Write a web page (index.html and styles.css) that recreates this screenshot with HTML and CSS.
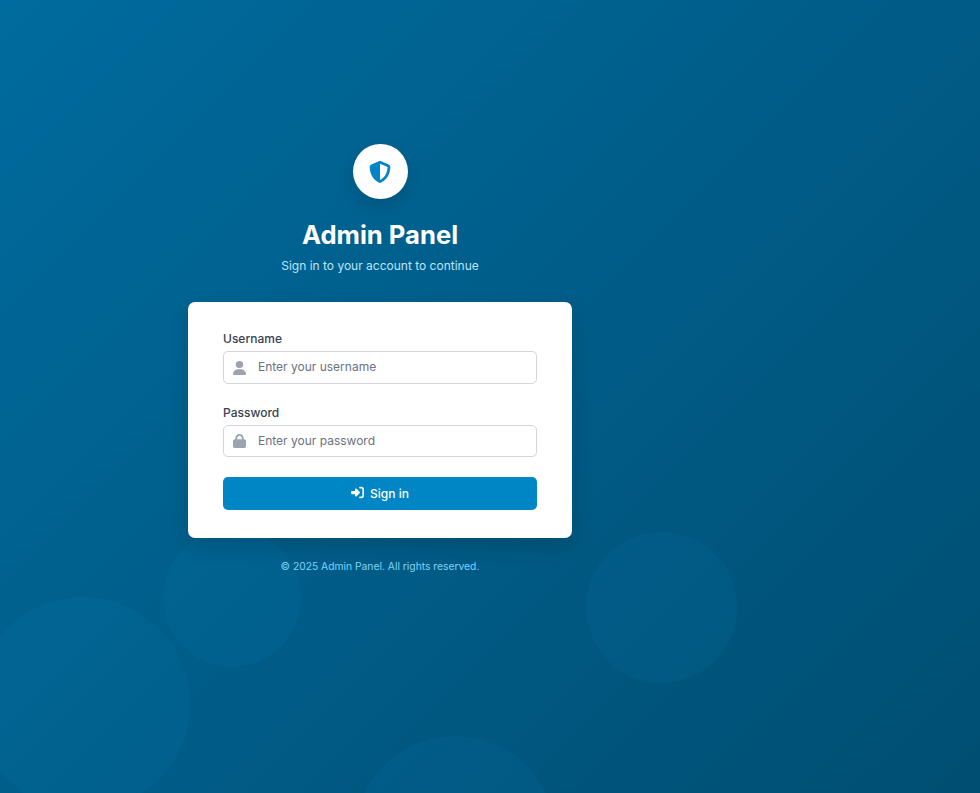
FILE: index.html

```html
<!DOCTYPE html>
<html lang="en">
<head>
  <meta charset="UTF-8" />
  <meta name="viewport" content="width=device-width, initial-scale=1.0"/>
  <title>Admin Panel - Login</title>
  <link rel="stylesheet" href="styles.css">
</head>
<body>
  <div class="circles">
    <div class="circle circle-large"></div>
    <div class="circle circle-small"></div>
    <div class="circle circle-right"></div>
    <div class="circle circle-bottom"></div>
  </div>

  <main class="login-column">
    <div class="logo">
      <svg class="logo-icon" viewBox="0 0 512 512"><path d="M256 0c4.600 0 9.200 1 13.400 2.900L457.700 82.800c22 9.300 38.400 31 38.300 57.200c-.5 99.200-41.300 280.700-213.600 363.200c-16.700 8-36.100 8-52.800 0C57.300 420.700 16.500 239.200 16 140c-.1-26.200 16.300-47.900 38.300-57.200L242.700 2.900C246.800 1 251.400 0 256 0zm0 66.800V444.800C394 378 431.100 230.100 432 141.400L256 66.800l0 0z"/></svg>
    </div>
    <h1>Admin Panel</h1>
    <p class="subtitle">Sign in to your account to continue</p>

    <form class="card">
      <div class="field">
        <label for="username">Username</label>
        <div class="input-wrap">
          <svg class="input-icon" viewBox="0 0 448 512" preserveAspectRatio="none"><path d="M224 256A128 128 0 1 0 224 0a128 128 0 1 0 0 256zm-45.700 48C79.800 304 0 383.800 0 482.300C0 498.700 13.300 512 29.700 512H418.300c16.400 0 29.700-13.300 29.700-29.700C448 383.800 368.200 304 269.700 304H178.300z"/></svg>
          <input type="text" id="username" placeholder="Enter your username" />
        </div>
      </div>
      <div class="field">
        <label for="password">Password</label>
        <div class="input-wrap">
          <svg class="input-icon" viewBox="0 0 448 512" preserveAspectRatio="none"><path d="M144 144v48H304V144c0-44.200-35.800-80-80-80s-80 35.800-80 80zM80 192V144C80 64.500 144.500 0 224 0s144 64.500 144 144v48h16c35.300 0 64 28.700 64 64V448c0 35.300-28.700 64-64 64H64c-35.300 0-64-28.700-64-64V256c0-35.300 28.700-64 64-64H80z"/></svg>
          <input type="password" id="password" placeholder="Enter your password" />
        </div>
      </div>
      <button type="button" class="submit">
        <svg class="submit-icon" viewBox="0 0 512 512"><path d="M217.900 105.900L340.700 228.700c7.200 7.200 11.300 17.100 11.300 27.300s-4.100 20.100-11.300 27.300L217.900 406.100c-6.400 6.400-15 9.900-24 9.900c-18.700 0-33.900-15.200-33.900-33.900l0-62.100L32 320c-17.700 0-32-14.300-32-32l0-64c0-17.700 14.300-32 32-32l128 0 0-62.100c0-18.700 15.200-33.900 33.900-33.900c9 0 17.600 3.600 24 9.900zM352 416l64 0c17.700 0 32-14.300 32-32l0-256c0-17.700-14.300-32-32-32l-64 0c-17.700 0-32-14.300-32-32s14.300-32 32-32l64 0c53 0 96 43 96 96l0 256c0 53-43 96-96 96l-64 0c-17.700 0-32-14.300-32-32s14.300-32 32-32z"/></svg>
        Sign in
      </button>
    </form>

    <p class="copyright">© 2025 Admin Panel. All rights reserved.</p>
  </main>
</body>
</html>
```

FILE: styles.css

```css
* {
  box-sizing: border-box;
}
html, body {
  height: 100%;
}
body {
  margin: 0;
  font-family: Inter, "Liberation Sans", sans-serif;
  background: linear-gradient(135deg, #006b9e, #004e72);
  position: relative;
  overflow: hidden;
}

/* background circles */
.circles {
  position: absolute;
  inset: 0;
  overflow: hidden;
}
.circle {
  position: absolute;
  border-radius: 50%;
  background: rgba(14, 165, 233, 0.06);
}
.circle-large {
  width: 214px;
  height: 214px;
  left: -24px;
  top: 597px;
}
.circle-small {
  width: 138px;
  height: 138px;
  left: 163px;
  top: 529px;
}
.circle-right {
  width: 151px;
  height: 151px;
  left: 586px;
  top: 532px;
}
.circle-bottom {
  width: 200px;
  height: 200px;
  left: 355px;
  top: 736px;
}

.login-column {
  position: relative;
  width: 760px;
  padding-top: 144px;
  display: flex;
  flex-direction: column;
  align-items: center;
}
.logo {
  width: 55px;
  height: 55px;
  border-radius: 50%;
  background: #ffffff;
  box-shadow: 0 8px 16px rgba(0, 0, 0, 0.12);
  display: flex;
  align-items: center;
  justify-content: center;
}
.logo-icon {
  width: 22px;
  height: 22px;
  fill: #0284c7;
}
h1 {
  margin: 20px 0 0;
  color: #ffffff;
  font-size: 25.6px;
  line-height: 32px;
  font-weight: 700;
}
.subtitle {
  margin: 6px 0 0;
  color: #bae6fd;
  font-size: 12px;
  line-height: 18px;
}
.card {
  width: 384px;
  margin-top: 27px;
  padding: 28px 35px;
  background: #ffffff;
  border-radius: 7px;
  box-shadow: 0 8px 20px rgba(0, 0, 0, 0.14);
}
.field {
  margin-bottom: 20px;
}
label {
  display: block;
  margin-bottom: 3px;
  color: #374151;
  font-size: 12px;
  line-height: 18px;
  font-weight: 500;
}
.input-wrap {
  position: relative;
}
.input-icon {
  position: absolute;
  left: 10px;
  top: 9.500px;
  width: 13px;
  height: 14px;
  fill: #9ca3af;
}
input {
  display: block;
  width: 100%;
  height: 32.500px;
  padding: 0 10px 1px 34px;
  border: 1px solid #d1d5db;
  border-radius: 5px;
  font-family: inherit;
  font-size: 12px;
  color: #111827;
  outline: none;
}
input::placeholder {
  color: #6b7280;
}
.submit {
  width: 100%;
  height: 33px;
  border: none;
  border-radius: 5px;
  background: #0086c5;
  color: #ffffff;
  font-family: inherit;
  font-size: 12px;
  font-weight: 500;
  display: flex;
  align-items: center;
  justify-content: center;
  gap: 6px;
  cursor: pointer;
}
.submit-icon {
  width: 13px;
  height: 13px;
  fill: #ffffff;
  margin-top: -3px;
}
.copyright {
  margin: 20px 0 0;
  color: #7dd3fc;
  font-size: 10.300px;
  line-height: 16px;
}
```
